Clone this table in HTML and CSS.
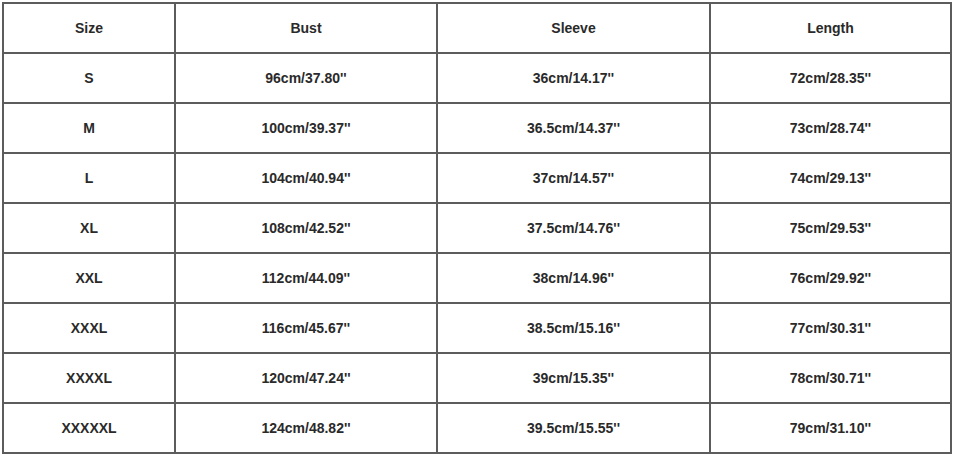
FILE: index.html
```html
<!DOCTYPE html>
<html lang="en">
<head>
<meta charset="utf-8">
<title>Size Chart</title>
<link rel="stylesheet" href="styles.css">
</head>
<body>
<div class="wrap">
<table class="chart">
<colgroup>
<col class="c1"><col class="c2"><col class="c3"><col class="c4">
</colgroup>
<tr><td>Size</td><td>Bust</td><td>Sleeve</td><td>Length</td></tr>
<tr><td>S</td><td>96cm/37.80''</td><td>36cm/14.17''</td><td>72cm/28.35''</td></tr>
<tr><td>M</td><td>100cm/39.37''</td><td>36.5cm/14.37''</td><td>73cm/28.74''</td></tr>
<tr><td>L</td><td>104cm/40.94''</td><td>37cm/14.57''</td><td>74cm/29.13''</td></tr>
<tr><td>XL</td><td>108cm/42.52''</td><td>37.5cm/14.76''</td><td>75cm/29.53''</td></tr>
<tr><td>XXL</td><td>112cm/44.09''</td><td>38cm/14.96''</td><td>76cm/29.92''</td></tr>
<tr><td>XXXL</td><td>116cm/45.67''</td><td>38.5cm/15.16''</td><td>77cm/30.31''</td></tr>
<tr><td>XXXXL</td><td>120cm/47.24''</td><td>39cm/15.35''</td><td>78cm/30.71''</td></tr>
<tr><td>XXXXXL</td><td>124cm/48.82''</td><td>39.5cm/15.55''</td><td>79cm/31.10''</td></tr>
</table>
</div>
</body>
</html>
```
FILE: styles.css
```css
html, body {
  margin: 0;
  padding: 0;
  background: #fff;
}
.wrap {
  padding: 2px 0 0 2px;
}
.chart {
  border-collapse: collapse;
  table-layout: fixed;
  font-family: "Liberation Sans", Arial, sans-serif;
  font-size: 14px;
  font-weight: bold;
  color: #2a2a2a;
}
.c1 { width: 172px; }
.c2 { width: 262px; }
.c3 { width: 273px; }
.c4 { width: 241px; }
.chart td {
  border: 2px solid #5c5c5c;
  height: 48px;
  padding: 0;
  text-align: center;
  vertical-align: middle;
}
```
